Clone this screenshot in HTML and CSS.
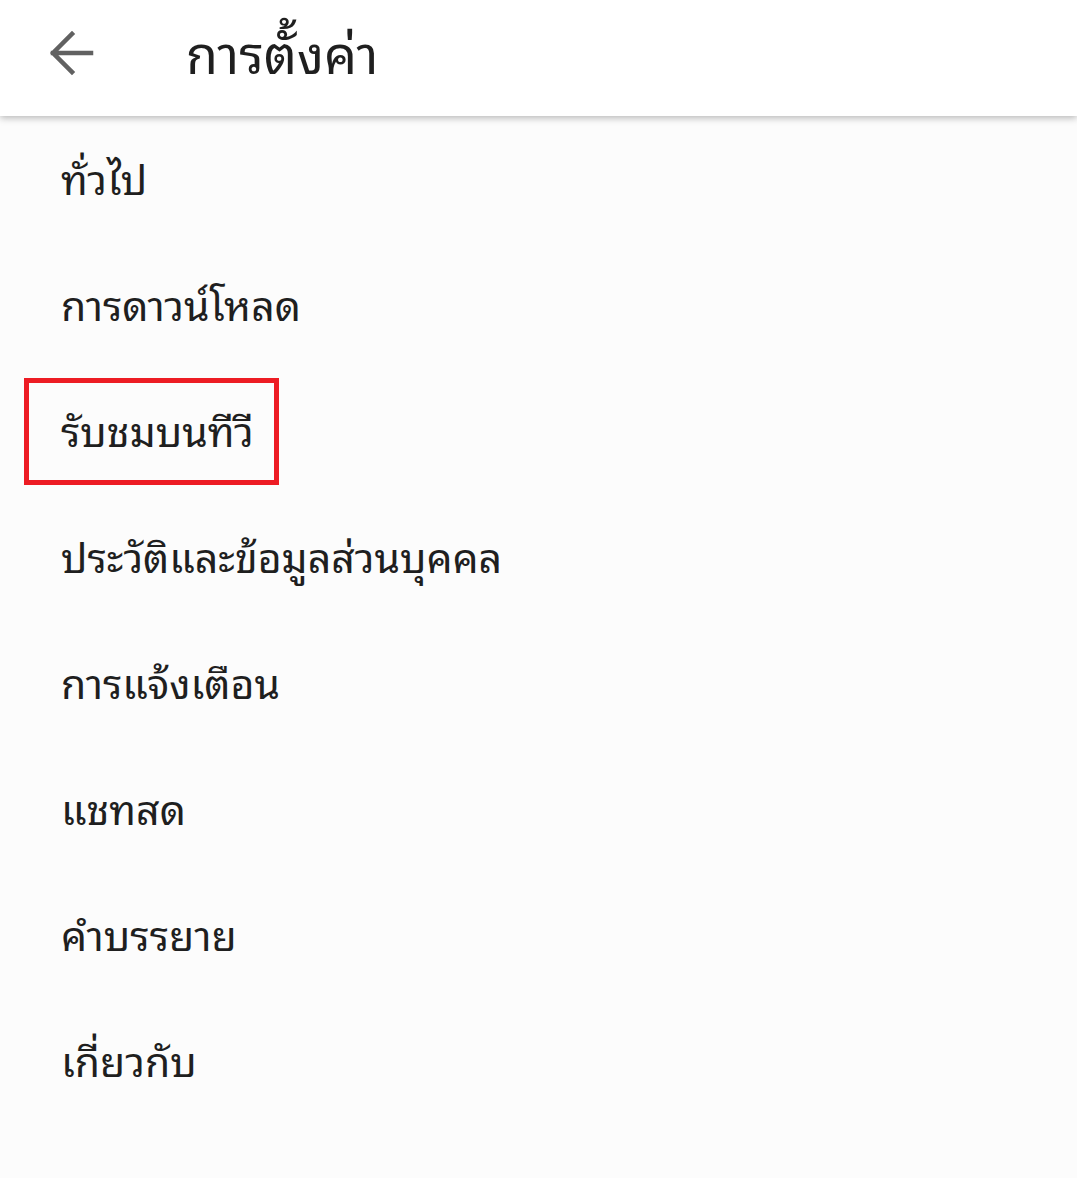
FILE: index.html
```html
<!DOCTYPE html>
<html lang="th">
<head>
<meta charset="utf-8">
<link rel="stylesheet" href="styles.css">
</head>
<body>
<header class="appbar">
  <svg class="back" width="48" height="48" viewBox="0 0 48 48"><path d="M44 24H6M25 5L6 24l19 19" fill="none" stroke="#616161" stroke-width="4.5" stroke-linecap="square"/></svg>
  <h1 class="title">การตั้งค่า</h1>
</header>
<main class="list">
  <div class="item">ทั่วไป</div>
  <div class="item">การดาวน์โหลด</div>
  <div class="item"><span class="mark">รับชมบนทีวี</span></div>
  <div class="item">ประวัติและข้อมูลส่วนบุคคล</div>
  <div class="item">การแจ้งเตือน</div>
  <div class="item">แชทสด</div>
  <div class="item">คำบรรยาย</div>
  <div class="item">เกี่ยวกับ</div>
</main>
</body>
</html>
```
FILE: styles.css
```css
html, body { margin: 0; padding: 0; }
body {
  background: #fcfcfc;
  font-family: "Noto Sans Thai Looped", "Noto Sans", sans-serif;
  color: #1f1f1f;
  width: 1077px;
  height: 1178px;
  overflow: hidden;
}
.appbar {
  height: 116px;
  background: #fff;
  display: flex;
  align-items: center;
  box-shadow: 0 2px 7px rgba(0,0,0,0.28);
  position: relative;
}
.back { margin-left: 47px; margin-bottom: 10px; flex: none; }
.title {
  margin: 0 0 16px 91px;
  font-size: 52px;
  font-weight: 400;
  color: #1f1f1f;
}
.list { padding-top: 0; }
.item {
  box-sizing: border-box;
  height: 126px;
  padding-bottom: 6px;
  display: flex;
  align-items: center;
  padding-left: 61px;
  font-size: 41px;
}
.mark {
  margin-left: -37px;
  margin-top: 6px;
  padding: 0 20px 6px 32px;
  height: 91px;
  display: flex;
  align-items: center;
  border: 5px solid #ed1c24;
}
```
